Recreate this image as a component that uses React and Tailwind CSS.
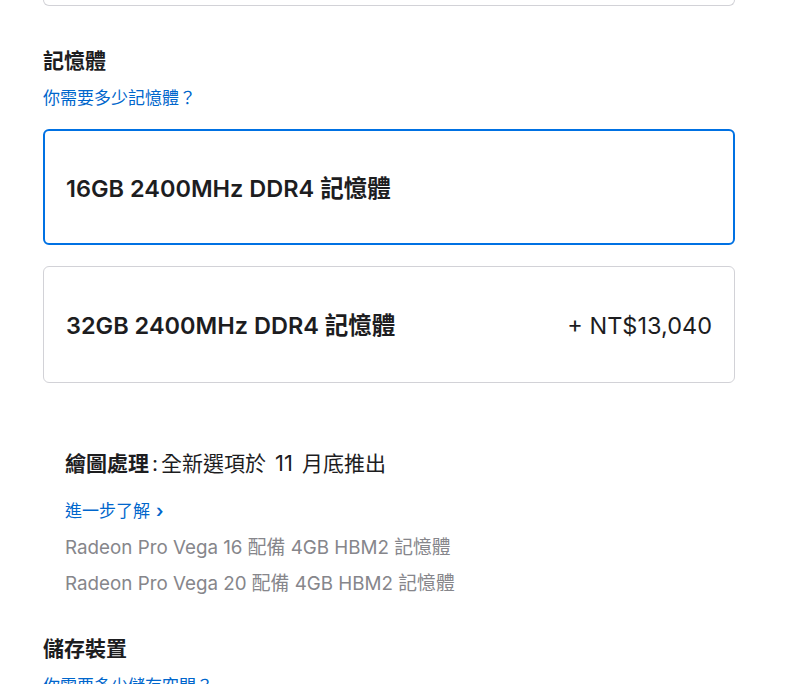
export default function App() {
  const font = { fontFamily: 'Inter, "Noto Sans CJK TC", "Noto Sans", sans-serif' };
  return (
    <div className="w-[800px] h-[684px] overflow-hidden bg-white text-[#1d1d1f]" style={font}>
      <div className="ml-[43px] w-[692px]">
        <div className="h-[6px] border border-t-0 border-[#d2d2d7] rounded-b-[6px]" />
        <h2 className="mt-[41px] text-[21px] leading-[28px] font-bold">記憶體</h2>
        <a className="mt-[12px] block text-[17px] leading-[22px] text-[#0066cc]">你需要多少記憶體？</a>
        <div className="mt-[20px] flex flex-col gap-[21px]">
          <div className="h-[116px] rounded-[6px] border-2 border-[#0071e3] px-[21px] pt-[3px] flex items-center justify-between">
            <span className="text-[23.5px] leading-[30px] font-semibold">16GB 2400MHz DDR4 記憶體</span>
          </div>
          <div className="h-[117px] rounded-[6px] border border-[#d2d2d7] px-[22px] pt-[2px] flex items-center justify-between">
            <span className="text-[23.5px] leading-[30px] font-semibold">32GB 2400MHz DDR4 記憶體</span>
            <span className="text-[23.5px] leading-[30px]">+ NT$13,040</span>
          </div>
        </div>
        <div className="pl-[22px] mt-[66px]">
          <p className="text-[21px] leading-[28px]">
            <span className="font-bold">繪圖處理</span>
            <span className="mx-[3px]">:</span>全新選項於<span className="text-[22px] mx-[9px]">11</span>月底推出
          </p>
          <a className="mt-[22px] flex items-center gap-[6px] text-[17px] leading-[22px] text-[#0066cc]">
            進一步了解<span className="font-semibold text-[18px]">›</span>
          </a>
          <p className="mt-[14px] text-[18.8px] leading-[24px] text-[#86868b]">Radeon Pro Vega 16 配備 4GB HBM2 記憶體</p>
          <p className="mt-[12px] text-[18.8px] leading-[24px] text-[#86868b]">Radeon Pro Vega 20 配備 4GB HBM2 記憶體</p>
        </div>
        <h2 className="mt-[39px] text-[21px] leading-[28px] font-bold">儲存裝置</h2>
        <a className="mt-[12px] block text-[17px] leading-[22px] text-[#0066cc]">你需要多少儲存空間？</a>
      </div>
    </div>
  );
}
